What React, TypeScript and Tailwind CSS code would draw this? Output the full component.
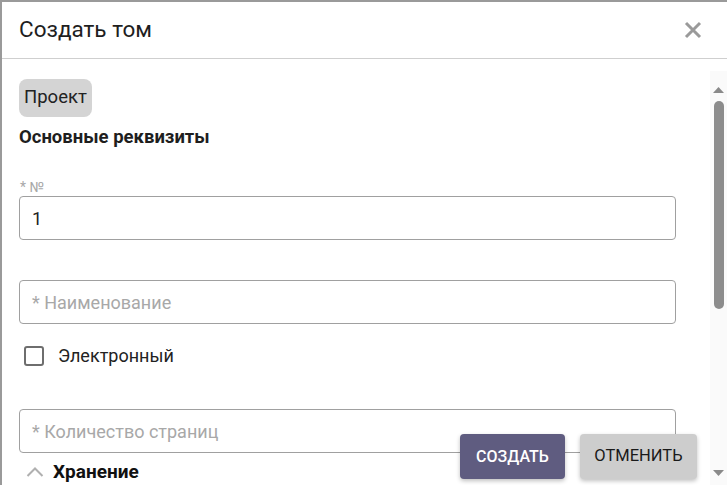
import { useState } from "react"

function Field({ placeholder, value }: { placeholder?: string; value?: string }) {
  return (
    <div className="h-[44px] w-[657px] rounded-[4px] border border-[#a0a0a0] flex items-center px-3">
      {value ? (
        <span className="text-[18px] text-[#222]">{value}</span>
      ) : (
        <span className="text-[18px] text-[#a8a8a8]">{placeholder}</span>
      )}
    </div>
  )
}

export default function App() {
  const [electronic, setElectronic] = useState(false)

  return (
    <div
      className="relative w-[727px] h-[485px] overflow-hidden bg-white border-l-2 border-t-2 border-[#9a9a9a] text-[#222]"
      style={{ fontFamily: "Roboto, 'Noto Sans', sans-serif" }}
    >
      <div className="h-[57px] border-b border-[#cfcfcf] flex items-center justify-between pl-[17px] pr-[24px]">
        <h2 className="text-[22.5px] text-[#1e1e1e]">Создать том</h2>
        <svg width="20" height="20" viewBox="0 0 20 20">
          <path d="M3 3 L17 17 M17 3 L3 17" stroke="#9a9a9a" strokeWidth="3" strokeLinecap="butt" />
        </svg>
      </div>

      <div className="flex h-[426px]">
        <div className="flex-1 pl-[17px] pt-[20px]">
          <div className="inline-flex items-center h-[38px] px-[5px] rounded-[8px] bg-[#d4d4d4] text-[18.5px] text-[#222]">
            Проект
          </div>
          <div className="mt-[7px] text-[18.5px] font-bold leading-[26px] text-[#1e1e1e]">Основные реквизиты</div>

          <div className="mt-[28px] text-[14px] leading-[18px] text-[#a8a8a8] pl-[1px]">* №</div>
          <div>
            <Field value="1" />
          </div>

          <div className="mt-[40px]">
            <Field placeholder="* Наименование" />
          </div>

          <label className="mt-[20px] flex items-center gap-[14px] pl-[5px] cursor-pointer">
            <input
              type="checkbox"
              checked={electronic}
              onChange={(e) => setElectronic(e.target.checked)}
              className="appearance-none w-[20px] h-[20px] rounded-[3px] border-2 border-[#6e6e6e]"
            />
            <span className="text-[18px] leading-[24px] text-[#222]">Электронный</span>
          </label>

          <div className="mt-[41px]">
            <Field placeholder="* Количество страниц" />
          </div>

          <div className="mt-[5px] flex items-center gap-[9px] pl-[7px]">
            <svg width="18" height="12" viewBox="0 0 18 12">
              <path d="M1.5 10 L9 2.5 L16.5 10" fill="none" stroke="#b0b0b0" strokeWidth="2" />
            </svg>
            <span className="text-[19px] font-bold text-[#111]">Хранение</span>
          </div>
        </div>

        <div className="w-[17px] mt-[12px] bg-[#fafafa] flex flex-col items-center">
          <svg width="11" height="7" viewBox="0 0 11 7" className="mt-[15px]">
            <path d="M0 7 L5.5 1 L11 7 Z" fill="#8a8a8a" />
          </svg>
          <div className="mt-[8px] w-[10px] h-[208px] rounded-full bg-[#8c8c8c]" />
          <div className="flex-1" />
          <svg width="11" height="7" viewBox="0 0 11 7" className="mb-[8px]">
            <path d="M0 0 L11 0 L5.5 6 Z" fill="#8a8a8a" />
          </svg>
        </div>
      </div>

      <div className="absolute right-[30px] bottom-[6px] flex gap-[15px]">
        <button className="w-[105px] h-[45px] rounded-[4px] bg-[#5f5c80] text-white text-[16px] font-medium shadow-[0_2px_4px_rgba(0,0,0,0.25)]">
          СОЗДАТЬ
        </button>
        <button className="w-[117px] h-[45px] rounded-[4px] bg-[#cdcdcd] text-[#1a1a1a] text-[16.5px] shadow-[0_2px_4px_rgba(0,0,0,0.25)]">
          ОТМЕНИТЬ
        </button>
      </div>
    </div>
  )
}
